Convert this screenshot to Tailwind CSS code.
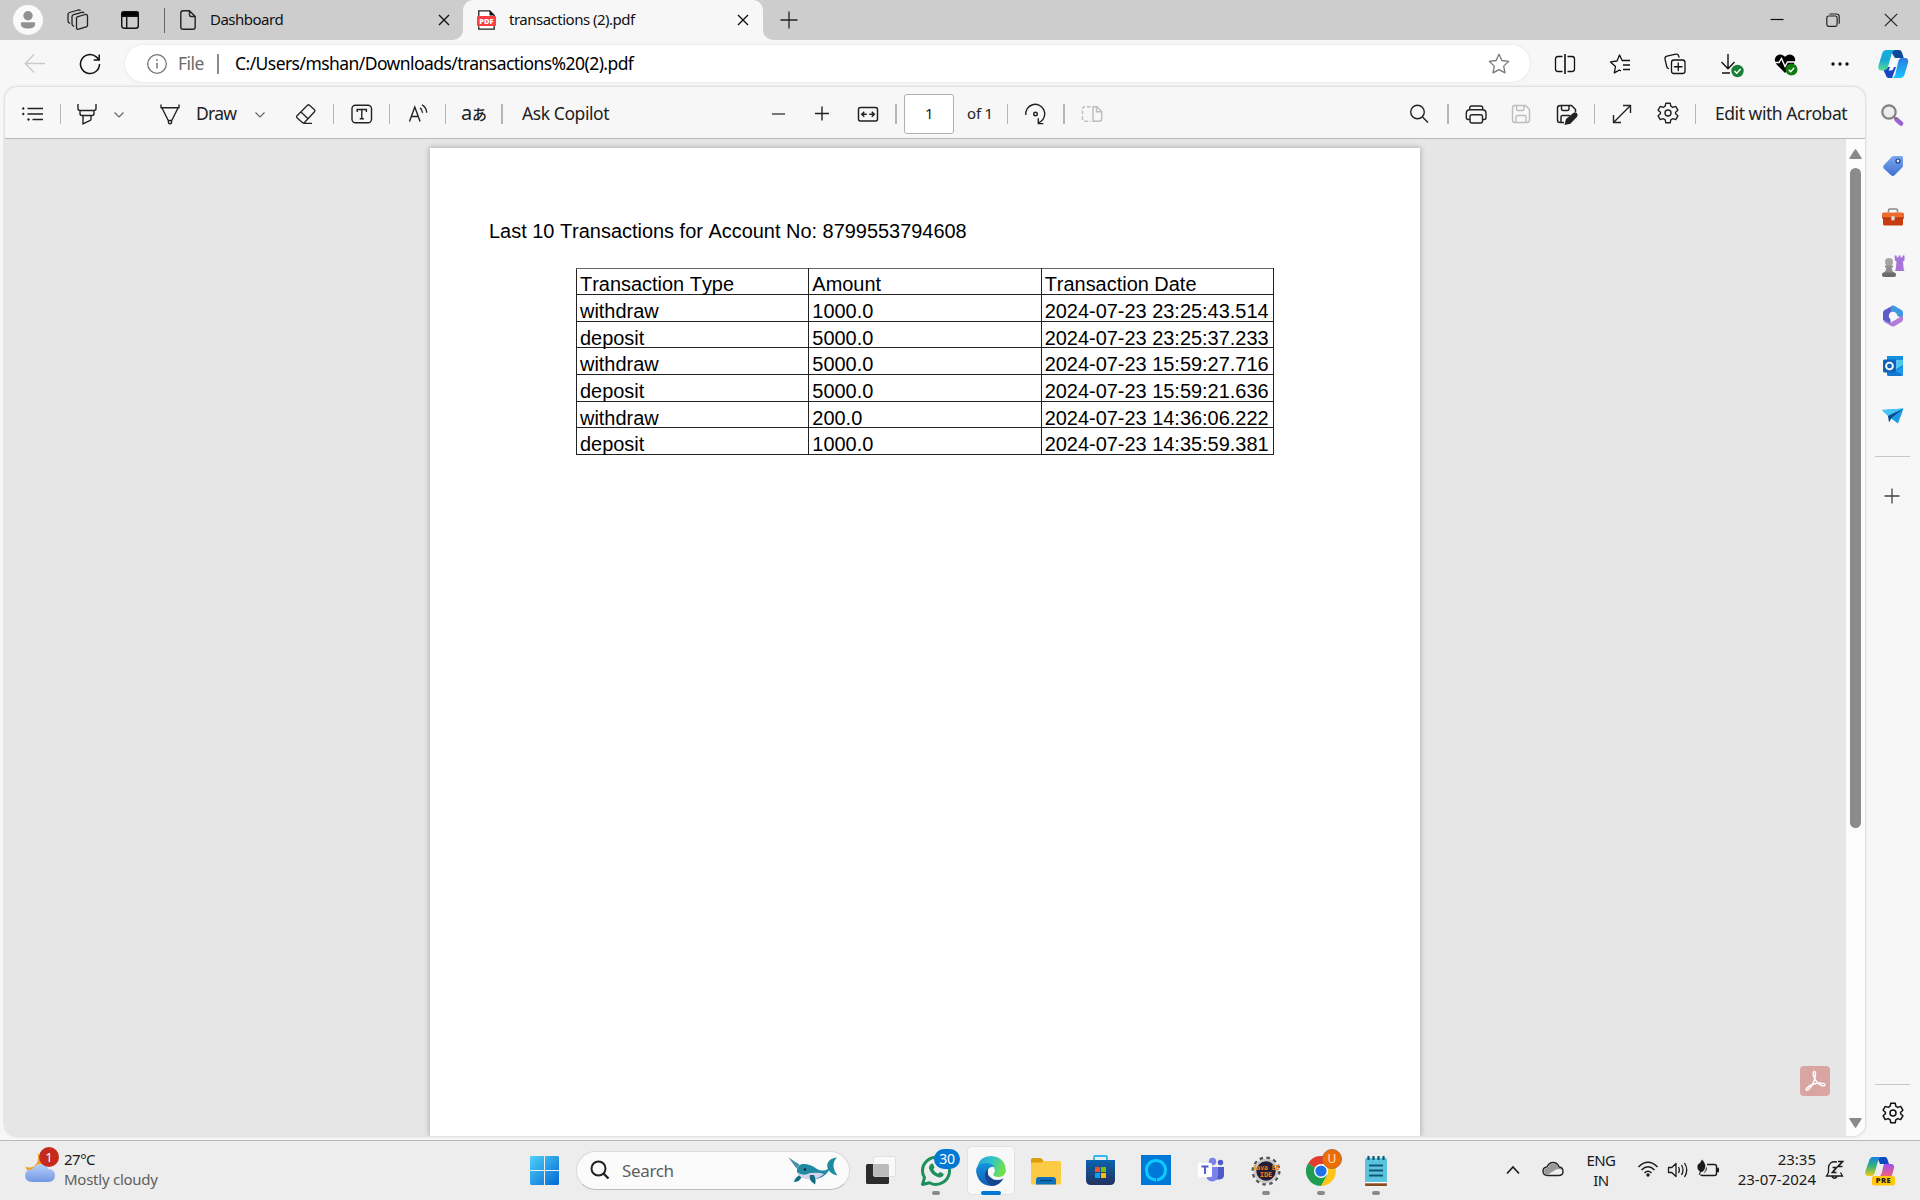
<!DOCTYPE html>
<html lang="en">
<head>
<meta charset="utf-8">
<title>transactions (2).pdf</title>
<script src="https://cdn.jsdelivr.net/npm/@tailwindcss/browser@4"></script>
</head>
<body class="w-[1920px] h-[1200px] overflow-hidden bg-[#f7f7f7] font-['Noto_Sans','Open_Sans',sans-serif] text-[#111] flex flex-col">

<!-- Tab strip -->
<header class="flex h-10 shrink-0 bg-[#f7f7f7]">
  <div class="flex items-center w-[463px] bg-[#cdcdcd] rounded-br-[10px]">
    <svg class="ml-[13px] shrink-0" width="30" height="30" viewBox="0 0 30 30"><circle cx="15" cy="15" r="15" fill="#fafafa"/><circle cx="15" cy="10.8" r="4.7" fill="#919191"/><path d="M8 17.3h14v2.200c0 2.600-3 4-7 4s-7-1.400-7-4z" fill="#919191"/></svg>
    <svg class="ml-[23px] shrink-0" width="24" height="24" viewBox="0 0 24 24" fill="none" stroke="#222" stroke-width="1.300" stroke-linejoin="round" stroke-linecap="round"><path d="M11.200 8.800l8-2.300q2.300-.5 2.300 1.700v9q0 1.300-1.300 1.700l-7.500 2.300q-2.200.6-2.200-1.600v-9q0-1.300.7-1.800z"/><path d="M7.700 18.200q-1.700-.4-1.700-2.200V8.800q0-1.600 1.600-2.100l8.400-2.400q1.300-.2 1.800.4M3.600 15.200Q2 14.600 2 12.700V6.500q0-1.500 1.500-2L12.200 2q1.300-.3 1.900.3"/></svg>
    <svg class="ml-[28px] shrink-0" width="24" height="24" viewBox="0 0 24 24" fill="none" stroke="#111" stroke-width="1.400"><rect x="3.700" y="3.700" width="16.600" height="16.600" rx="2.500"/><path d="M3.700 8.200V6q0-2.300 2.300-2.300h12q2.300 0 2.300 2.300v2.200z" fill="#000"/><path d="M8.700 8v12"/></svg>
    <div class="ml-[22px] w-px h-[25px] bg-[#666] shrink-0"></div>
    <svg class="ml-[15px] shrink-0" width="16" height="20" viewBox="0 0 16 20" fill="none" stroke="#222" stroke-width="1.400" stroke-linejoin="round"><path d="M.8 3q0-2.200 2.200-2.200h6.500L15.200 6.500V17q0 2.200-2.200 2.200H3Q.8 19.200.8 17zM9.500.8V5q0 1.500 1.500 1.500h4.200"/></svg>
    <span class="ml-[14px] w-[228px] mb-[2px] shrink-0 text-[15px] leading-5 tracking-[-0.5px] whitespace-nowrap">Dashboard</span>
    <svg class="shrink-0" width="12" height="12" viewBox="0 0 12 12" stroke="#111" stroke-width="1.400"><path d="M1 1l10 10M11 1L1 11"/></svg>
  </div>
  <div class="w-[300px] bg-[#cdcdcd]">
    <div class="flex items-center h-full bg-[#f7f7f7] rounded-t-[10px]">
      <svg class="ml-[14px] shrink-0" width="19" height="20" viewBox="0 0 19 20"><path d="M1.800 7V.8h11l4.400 4.400v14H1.800v-3" fill="#fff" stroke="#222" stroke-width="1.300"/><path d="M12.500.5v5h5z" fill="#111"/><rect x="0" y="6" width="19" height="10" rx="1" fill="#f93f3f"/><text x="9.500" y="13.900" text-anchor="middle" font-family="Open Sans" font-size="7.500" font-weight="800" fill="#fff">PDF</text></svg>
      <span class="ml-[13px] w-[228px] mb-[2px] text-[15px] leading-5 tracking-[-0.5px] whitespace-nowrap">transactions (2).pdf</span>
      <svg width="12" height="12" viewBox="0 0 12 12" stroke="#111" stroke-width="1.400"><path d="M1 1l10 10M11 1L1 11"/></svg>
    </div>
  </div>
  <div class="flex items-center flex-1 bg-[#cdcdcd] rounded-bl-[10px]">
    <svg class="ml-[17px]" width="18" height="18" viewBox="0 0 18 18" stroke="#222" stroke-width="1.300"><path d="M9 .5v17M.5 9h17"/></svg>
    <svg class="ml-auto" width="14" height="14" viewBox="0 0 14 14" stroke="#111" stroke-width="1.200"><path d="M.5 6.500h13"/></svg>
    <svg class="ml-[42px]" width="14" height="14" viewBox="0 0 14 14" fill="none" stroke="#222" stroke-width="1.200"><rect x=".8" y="3" width="10.300" height="10.300" rx="1.800"/><path d="M3.500 1h7q2.700 0 2.700 2.700v7"/></svg>
    <svg class="ml-[44px] mr-[22px]" width="14" height="14" viewBox="0 0 14 14" stroke="#222" stroke-width="1.200"><path d="M.8.800l12.400 12.400M13.200.800L.8 13.200"/></svg>
  </div>
</header>

<!-- Address row -->
<nav class="flex items-center h-[47px] shrink-0">
  <svg class="ml-[23px] shrink-0" width="24" height="24" viewBox="0 0 24 24" fill="none" stroke="#c9c9c9" stroke-width="1.400"><path d="M22 11.500H2.500M11 2.500l-8.700 9 8.700 9"/></svg>
  <svg class="ml-[31px] shrink-0" width="24" height="24" viewBox="0 0 24 24" fill="none" stroke="#111" stroke-width="1.500"><path d="M21.500 12a9.500 9.500 0 1 1-3.200-7.100L21 7.500M21.200 2.500v5.500h-5.500"/></svg>
  <div class="ml-[23px] flex items-center w-[1405px] h-[37px] rounded-full bg-white shadow-[0_0_3px_rgba(0,0,0,0.10)]">
    <svg class="ml-[22px] shrink-0" width="20" height="20" viewBox="0 0 20 20" fill="none" stroke="#767676" stroke-width="1.300"><circle cx="10" cy="10" r="9.300"/><path d="M10 8.800v5.700" stroke-width="1.500"/><circle cx="10" cy="6" r=".9" fill="#767676" stroke="none"/></svg>
    <span class="ml-[11px] w-[39px] mb-[2px] text-[17.500px] leading-6 tracking-[-0.5px] text-[#6b6b6b]">File</span>
    <div class="w-[2px] h-5 bg-[#8a8a8a]"></div>
    <span class="ml-[16px] mb-[2px] text-[17.500px] leading-6 tracking-[-0.56px] whitespace-nowrap text-black">C:/Users/mshan/Downloads/transactions%20(2).pdf</span>
    <svg class="ml-auto mr-[19px]" width="24" height="24" viewBox="0 0 24 24" fill="none" stroke="#777" stroke-width="1.300" stroke-linejoin="round"><path d="M12 2.300l2.900 6.200 6.800.9-5 4.700 1.300 6.800-6-3.300-6 3.300 1.300-6.800-5-4.700 6.800-.9z"/></svg>
  </div>
  <svg class="ml-[23px] shrink-0" width="24" height="24" viewBox="0 0 24 24" fill="none" stroke="#111" stroke-width="1.300"><path d="M9.500 4.500H5q-2.500 0-2.500 2.500v10q0 2.500 2.500 2.500h4.500M14.500 4.500H19q2.500 0 2.500 2.500v10q0 2.500-2.500 2.500h-4.500"/><path d="M12 2v20" stroke-width="1.600"/></svg>
  <svg class="ml-[31px] shrink-0" width="24" height="24" viewBox="0 0 24 24" fill="none" stroke="#111" stroke-width="1.300" stroke-linejoin="round"><path d="M13 19l-1.500-1-5.200 2.900 1.200-6.400-5-4.600 6.500-.9L11.500 3l2.700 5.500H22M15 13h7M15 17.500h7"/></svg>
  <svg class="ml-[31px] shrink-0" width="24" height="24" viewBox="0 0 24 24" fill="none" stroke="#111" stroke-width="1.300" stroke-linecap="round"><rect x="8.500" y="8" width="13.500" height="13.500" rx="2.500"/><path d="M15.250 11v7.500M11.500 14.750H19M5.500 16.500Q4 16 3.700 14.500L2 7.200Q1.600 4.800 4 4.200l8.800-2Q15 1.800 15.700 4l.3 1.200"/></svg>
  <svg class="ml-[32px] shrink-0" width="28" height="28" viewBox="0 0 28 28" fill="none" stroke="#111" stroke-width="1.400"><path d="M9 4v14.500M2.500 12l6.500 6.700 6.500-6.700M3 23h8"/><circle cx="18.500" cy="21" r="6.200" fill="#1a7f37" stroke="none"/><path d="M15.500 21l2.200 2.200 4-4.200" stroke="#fff"/></svg>
  <svg class="ml-[25px] shrink-0" width="28" height="28" viewBox="0 0 28 28" fill="none"><path d="M13 23L4.200 14Q1.500 10 4 6.500q4-4 9 .2 5-4.200 9-.2 2.500 3.500-.2 7.500z" fill="#000"/><path d="M2 12.500h5l2.500-4 3.500 8 2.500-4.500h8" stroke="#fff" stroke-width="1.400"/><circle cx="19.500" cy="19.500" r="6" fill="#107c10"/><path d="M16.700 19.700l2 2 3.500-3.900" stroke="#fff" stroke-width="1.400"/></svg>
  <svg class="ml-[28px] shrink-0" width="24" height="24" viewBox="0 0 24 24" fill="#111"><circle cx="5" cy="12" r="1.700"/><circle cx="12" cy="12" r="1.700"/><circle cx="19" cy="12" r="1.700"/></svg>
  <svg class="ml-[26px] shrink-0" width="31" height="30" viewBox="0 0 31 30"><defs><linearGradient id="ca" x1="0" y1="0" x2="0" y2="1"><stop offset="0" stop-color="#0fafdc"/><stop offset=".5" stop-color="#1aa8d8"/><stop offset="1" stop-color="#5be08b"/></linearGradient><linearGradient id="cb" x1="0" y1="0" x2="0" y2="1"><stop offset="0" stop-color="#2b7be0"/><stop offset="1" stop-color="#17c3ff"/></linearGradient></defs><path d="M12 1h9q2.500 0 3.500 4l1.200 4H17z" fill="#0a4a9c"/><path d="M8.500 1H17q-2.500 1-3.400 4L10 18q-1 3.500-4 3.500H3.500Q-.5 21.500.5 16.500L4 5q1.200-4 4.500-4z" fill="url(#ca)"/><path d="M5.500 21.300Q9 21 10 18h8l-4 11h-3q-2.500 0-3.500-3.500z" fill="#1746c4"/><path d="M20.500 9H27q4 0 3 5l-3.300 11q-1 4-4.700 4h-8q2.500-.8 3.300-3.500l2.700-12q.9-4.500 3.500-4.500z" fill="url(#cb)"/><path d="M16.500 9.500h3q-2 1.500-2.500 4l-1.500 6q-.8 2-2.500 2h-2.500z" fill="#fff"/></svg>
</nav>

<div class="flex h-[1053px] shrink-0">
  <!-- PDF viewer -->
  <main class="ml-[5px] w-[1860px] h-[1049px] flex flex-col rounded-[12px] overflow-hidden shadow-[0_0_3px_rgba(0,0,0,0.25)] bg-[#f7f7f7]">
    <div class="flex items-center h-[52px] pt-[2px] shrink-0 border-b border-[#b9b9b9] text-[17.500px] tracking-[-0.42px] text-[#222] whitespace-nowrap">
      <svg class="ml-[15px] shrink-0" width="24" height="24" viewBox="0 0 24 24" stroke="#222" stroke-width="1.500" fill="#222"><path d="M7.500 6.500H23M7.500 12H23M12.500 17.500H23"/><circle cx="3.300" cy="6.500" r=".9" stroke-width=".6"/><circle cx="3.300" cy="12" r=".9" stroke-width=".6"/><circle cx="8.500" cy="17.500" r=".9" stroke-width=".6"/></svg>
      <div class="ml-[16px] w-px h-5 bg-[#b5b5b5] shrink-0"></div>
      <svg class="ml-[14px] shrink-0" width="24" height="24" viewBox="0 0 24 24" fill="none" stroke="#222" stroke-width="1.400"><path d="M3 2v4.500Q3 8.500 5 8.500h14q2 0 2-2V2M5 8.500v3q0 2 2 2h10q2 0 2-2v-3M8 13.500V22l7.200-3.500q.8-.5.8-1.500v-3.500"/></svg>
      <svg class="ml-[14px] shrink-0" width="12" height="12" viewBox="0 0 12 12" fill="none" stroke="#666" stroke-width="1.200"><path d="M1.500 4.500L6 9l4.500-4.500"/></svg>
      <svg class="ml-[33px] shrink-0" width="24" height="24" viewBox="0 0 24 24" fill="none" stroke="#222" stroke-width="1.400" stroke-linejoin="round"><path d="M3 2.500v3.300h18V2.500M4 6l6.500 13M20 6l-6.500 13M10.500 18.500V21q1.500 1.600 3 0v-2.500z"/></svg>
      <span class="ml-[14px] w-[41px] tracking-[-0.7px]">Draw</span>
      <svg class="ml-[17px] shrink-0" width="12" height="12" viewBox="0 0 12 12" fill="none" stroke="#666" stroke-width="1.200"><path d="M1.500 4.500L6 9l4.500-4.500"/></svg>
      <svg class="ml-[28px] shrink-0" width="24" height="24" viewBox="0 0 24 24" fill="none" stroke="#222" stroke-width="1.300" stroke-linejoin="round"><path d="M13.500 3.200q1-1 2 0l5 4.600q1 1 0 2L10.500 20.500q-1 1.200-2.200 0L3 15.700q-1-1 0-2zM6.700 9.800l7.300 7M9.500 21.300H18"/></svg>
      <div class="ml-[15px] w-px h-5 bg-[#b5b5b5] shrink-0"></div>
      <svg class="ml-[16px] shrink-0" width="24" height="24" viewBox="0 0 24 24" fill="none" stroke="#222" stroke-width="1.400"><rect x="2" y="3.300" width="19.500" height="17.400" rx="3.500"/><path d="M7.200 10V7.500h9.200V10M11.800 7.500v9.300M9.700 16.800h4.200"/></svg>
      <div class="ml-[15px] w-px h-5 bg-[#b5b5b5] shrink-0"></div>
      <svg class="ml-[16px] shrink-0" width="24" height="24" viewBox="0 0 24 24" fill="none" stroke="#222" stroke-width="1.400"><path d="M3.500 19.500L8.800 5l5.300 14.500M5.300 14.500h7M14 5.800q2.300 1.500 2.500 5M16 2.800q4.500 2.500 4.700 8"/></svg>
      <div class="ml-[15px] w-px h-5 bg-[#b5b5b5] shrink-0"></div>
      <span class="ml-[15px] w-[24px] shrink-0 flex items-baseline leading-6"><span class="text-[20px] tracking-[-0.3px]">a</span><span class="text-[15px] font-medium tracking-[-1px] font-['Noto_Sans_CJK_JP',sans-serif]">あ</span></span>
      <div class="ml-[16px] w-[2px] h-5 bg-[#b5b5b5] shrink-0"></div>
      <span class="ml-[19px] w-[90px]">Ask Copilot</span>
      <svg class="ml-[154px] shrink-0" width="24" height="24" viewBox="0 0 24 24" stroke="#777" stroke-width="1.800"><path d="M6 12h13"/></svg>
      <svg class="ml-[20px] shrink-0" width="24" height="24" viewBox="0 0 24 24" stroke="#222" stroke-width="1.400"><path d="M5 11.500h14M12 4.500v14"/></svg>
      <svg class="ml-[22px] shrink-0" width="24" height="24" viewBox="0 0 24 24" fill="none" stroke="#222" stroke-width="1.500"><rect x="2.500" y="5.500" width="19" height="13.500" rx="2"/><path d="M5.800 12.200h5M8.300 9.700l-2.500 2.500 2.500 2.500M13.300 12.200h5M15.800 9.700l2.500 2.500-2.500 2.500"/></svg>
      <div class="ml-[15px] w-[2px] h-5 bg-[#b5b5b5] shrink-0"></div>
      <div class="ml-[7px] w-[50px] h-10 shrink-0 bg-white border border-[#b0b0b0] rounded-[3px] flex items-center justify-center text-[15px]">1</div>
      <span class="ml-[13px] w-[26px] text-[15px] tracking-[-0.2px]">of 1</span>
      <div class="ml-[14px] w-px h-5 bg-[#b5b5b5] shrink-0"></div>
      <svg class="ml-[15px] shrink-0" width="24" height="24" viewBox="0 0 24 24" fill="none" stroke="#222" stroke-width="1.400"><path d="M2.800 13a9.500 9.500 0 1 1 15 6.500l-2.500 1.800M15.300 16.300v5.300h5"/><circle cx="12.500" cy="12" r="1.800"/></svg>
      <div class="ml-[16px] w-[2px] h-5 bg-[#b5b5b5] shrink-0"></div>
      <svg class="ml-[15px] shrink-0" width="24" height="24" viewBox="0 0 24 24" fill="none" stroke="#bdbdbd" stroke-width="1.400"><path d="M10.500 4.800H5q-2.500 0-2.500 2.500v9.400q0 2.500 2.500 2.500h5.500" stroke-dasharray="3.500 2"/><path d="M13 4.800h4l4.700 4.700v7.200q0 2.500-2.500 2.500H13zM16.500 4.800v5h5"/></svg>
      <svg class="ml-[303px] shrink-0" width="24" height="24" viewBox="0 0 24 24" fill="none" stroke="#222" stroke-width="1.400"><circle cx="10.500" cy="10" r="6.800"/><path d="M15.500 15l5.500 5.500"/></svg>
      <div class="ml-[16px] w-[2px] h-5 bg-[#b5b5b5] shrink-0"></div>
      <svg class="ml-[15px] shrink-0" width="24" height="24" viewBox="0 0 24 24" fill="none" stroke="#222" stroke-width="1.400"><path d="M5.700 7.500V6q0-2 2-2h9q2 0 2 2v1.500M6 17.500H4.300Q2.300 17.500 2.300 15.500v-4.200q0-3.600 3.600-3.600h12.500q3.600 0 3.600 3.600v4.200q0 2-2 2H18.500"/><rect x="6" y="12.700" width="12.500" height="8.300" rx="2"/></svg>
      <svg class="ml-[21px] shrink-0" width="24" height="24" viewBox="0 0 24 24" fill="none" stroke="#bdbdbd" stroke-width="1.400"><path d="M5.500 3.500h11l4 4v10.500q0 2.500-2.500 2.500H6q-2.500 0-2.500-2.500V6q0-2.500 2-2.500zM7.500 3.500V7q0 1.500 1.500 1.500h4.500Q15 8.500 15 7V3.500M7 20.500V15q0-1.500 1.500-1.500h7Q17 13.500 17 15v5.500"/></svg>
      <svg class="ml-[22px] shrink-0" width="24" height="24" viewBox="0 0 24 24" fill="none" stroke="#222" stroke-width="1.500"><path d="M20.500 10V7.500l-4-4h-11q-3 0-3 2.500v12q0 2.500 2.500 2.500h4M6.500 3.500V7Q6.500 8.500 8 8.500h4.500Q14 8.500 14 7V3.500M6 20.500V15q0-1.500 1.500-1.500H15"/><path d="M10.500 22l1.200-4.500 7-6q1.500-1 2.700.2t0 2.700l-6.400 6.600z" fill="#222"/></svg>
      <div class="ml-[15px] w-px h-5 bg-[#b5b5b5] shrink-0"></div>
      <svg class="ml-[15px] shrink-0" width="24" height="24" viewBox="0 0 24 24" fill="none" stroke="#222" stroke-width="1.400"><path d="M3.500 20.500l17-17M13 3.500h7.500V11M3.500 13v7.500H11"/></svg>
      <svg class="ml-[22px] mb-[2px] shrink-0" width="24" height="24" viewBox="0 0 24 24" fill="none" stroke="#222" stroke-width="1.400" stroke-linejoin="round"><circle cx="12" cy="12" r="3"/><path d="M9.800 2.200h4.400l.6 3 2 1.200 2.900-1 2.200 3.800-2.300 2v1.600l2.300 2-2.200 3.800-2.900-1-2 1.200-.6 3H9.800l-.6-3-2-1.200-2.900 1-2.200-3.800 2.300-2v-1.600l-2.300-2 2.200-3.800 2.900 1 2-1.200z"/></svg>
      <div class="ml-[15px] w-px h-5 bg-[#b5b5b5] shrink-0"></div>
      <span class="ml-[19px] tracking-[-0.45px]">Edit with Acrobat</span>
    </div>

    <div class="flex flex-1 min-h-0 bg-[#e6e6e6]">
      <!-- Page -->
      <article class="ml-[425px] mt-[9px] w-[990px] shrink-0 bg-white shadow-[0_0_5px_1px_rgba(0,0,0,0.22)] font-['Liberation_Sans',Arial,sans-serif] text-[19.960px] [font-kerning:none] text-black whitespace-nowrap">
        <h1 class="mt-[71px] ml-[59px] leading-[24px]">Last 10 Transactions for Account No: 8799553794608</h1>
        <table class="mt-[25px] ml-[146px] w-[698px] table-fixed border-collapse leading-[18px]">
          <tr class="h-[26px] align-top"><td class="border border-[#222] border-t-[#666] p-0 pl-[3px] pt-[6px]">Transaction Type</td><td class="border border-[#222] border-t-[#666] p-0 pl-[3px] pt-[6px]">Amount</td><td class="border border-[#222] border-t-[#666] p-0 pl-[3px] pt-[6px]">Transaction Date</td></tr>
          <tr class="h-[27px] align-top"><td class="border border-[#222] p-0 pl-[3px] pt-[7px]">withdraw</td><td class="border border-[#222] p-0 pl-[3px] pt-[7px]">1000.0</td><td class="border border-[#222] p-0 pl-[3px] pt-[7px]">2024-07-23 23:25:43.514</td></tr>
          <tr class="h-[26px] align-top"><td class="border border-[#222] p-0 pl-[3px] pt-[7px]">deposit</td><td class="border border-[#222] p-0 pl-[3px] pt-[7px]">5000.0</td><td class="border border-[#222] p-0 pl-[3px] pt-[7px]">2024-07-23 23:25:37.233</td></tr>
          <tr class="h-[27px] align-top"><td class="border border-[#222] p-0 pl-[3px] pt-[7px]">withdraw</td><td class="border border-[#222] p-0 pl-[3px] pt-[7px]">5000.0</td><td class="border border-[#222] p-0 pl-[3px] pt-[7px]">2024-07-23 15:59:27.716</td></tr>
          <tr class="h-[27px] align-top"><td class="border border-[#222] p-0 pl-[3px] pt-[7px]">deposit</td><td class="border border-[#222] p-0 pl-[3px] pt-[7px]">5000.0</td><td class="border border-[#222] p-0 pl-[3px] pt-[7px]">2024-07-23 15:59:21.636</td></tr>
          <tr class="h-[26px] align-top"><td class="border border-[#222] p-0 pl-[3px] pt-[7px]">withdraw</td><td class="border border-[#222] p-0 pl-[3px] pt-[7px]">200.0</td><td class="border border-[#222] p-0 pl-[3px] pt-[7px]">2024-07-23 14:36:06.222</td></tr>
          <tr class="h-[27px] align-top"><td class="border border-[#222] p-0 pl-[3px] pt-[7px]">deposit</td><td class="border border-[#222] p-0 pl-[3px] pt-[7px]">1000.0</td><td class="border border-[#222] p-0 pl-[3px] pt-[7px]">2024-07-23 14:35:59.381</td></tr>
        </table>
      </article>
      <div class="ml-auto mr-[16px] mb-[40px] self-end w-[30px] h-[30px] rounded-[4px] bg-[#d9a5a3]">
        <svg width="30" height="30" viewBox="0 0 30 30" fill="none" stroke="#fff" stroke-width="1.400"><path d="M14 5.500c2.500-.5 1.500 5 .3 8.500-1.500 4.500-4.800 10-7.300 10.200-2.800-.2 1-4.500 7-6.200 5-1.400 10.800-1.300 11 .7 0 2-4 1.200-7-1.500S11.500 7 14 5.500z"/></svg>
      </div>
      <div class="w-[19px] bg-[#fcfcfc] flex flex-col items-center">
        <svg class="mt-[10px] shrink-0" width="13" height="11" viewBox="0 0 13 11"><path d="M6.500 1L12 9.300H1z" fill="#8a8a8a" stroke="#8a8a8a" stroke-width="1.500" stroke-linejoin="round"/></svg>
        <div class="mt-[8px] w-[11px] h-[660px] rounded-full bg-[#8b8b8b]"></div>
        <svg class="mt-auto mb-[8px] shrink-0" width="13" height="11" viewBox="0 0 13 11"><path d="M6.500 10L12 1.700H1z" fill="#8a8a8a" stroke="#8a8a8a" stroke-width="1.500" stroke-linejoin="round"/></svg>
      </div>
    </div>
  </main>

  <!-- Sidebar -->
  <aside class="flex-1 flex flex-col items-center">
    <svg class="mt-[16px] mr-[2px] shrink-0" width="24" height="24" viewBox="0 0 24 24" fill="none"><path d="M16.500 16.500l4.500 4" stroke="#9b63d0" stroke-width="4.500" stroke-linecap="round"/><path d="M13.500 13.500l3 3" stroke="#777" stroke-width="2"/><circle cx="9" cy="9" r="6.700" stroke="#828282" stroke-width="2.200" fill="#ececec"/></svg>
    <svg class="mt-[27px] shrink-0" width="24" height="24" viewBox="0 0 24 24"><defs><linearGradient id="tg" x1="0" y1="0" x2="0" y2="1"><stop offset="0" stop-color="#79a9f2"/><stop offset="1" stop-color="#3f6fd0"/></linearGradient></defs><path d="M11 2.500Q11.800 2 13 2h7.500Q22 2 22 3.500v8q0 1.300-1 2.300l-7.500 7.500q-1.700 1.500-3.500 0L2.800 14.500q-1.500-1.700 0-3.300z" fill="url(#tg)"/><circle cx="17" cy="7" r="2" fill="#dce8fb" stroke="#223c82" stroke-width="1.200"/></svg>
    <svg class="mt-[27px] shrink-0" width="24" height="24" viewBox="0 0 24 24"><path d="M7.500 7.500V5.500Q7.500 4 9 4h6q1.500 0 1.500 1.500v2" fill="none" stroke="#888" stroke-width="1.600"/><rect x="2" y="9" width="20" height="11.500" rx="1.500" fill="#c83b10"/><path d="M1 9q0-1.500 1.500-1.500h19Q23 7.500 23 9v4H1z" fill="#ee6a2d"/><path d="M1 13h22" stroke="#9b2c0a"/><rect x="10.200" y="11" width="3.600" height="4.500" rx="1.500" fill="#d8d8d8"/></svg>
    <svg class="mt-[25px] shrink-0" width="24" height="24" viewBox="0 0 24 24"><path d="M13.500 1.500h2.200v2h1.800v-2h2v2h1.800v-2H23.500v5l-1.500 1 .7 7.500.8 2h-9.500l.8-2 .7-7.500-1.500-1z" fill="#a673d8"/><circle cx="8" cy="8" r="4" fill="#a5a5a5"/><path d="M4 11.500h8v2h-1.500q.5 4 3 5.500H2.500q2.500-1.500 3-5.500H4z" fill="#8d8d8d"/><rect x="1" y="18.500" width="14" height="4.500" rx="2" fill="#6b6b6b"/></svg>
    <svg class="mt-[26px] shrink-0" width="24" height="24" viewBox="0 0 24 24"><path d="M12 1.500L3.500 6Q2 7 2 8.500v7.500l7.500 4V8.500L16.500 4z" fill="#5b5cc9"/><path d="M10 2.200q2-1.200 4 0L20.500 6Q22 7 22 8.800V15l-6-3.500q-1-3.500-6-2.500-.5-4 0-6.800z" fill="#3e9ae0"/><path d="M2.200 16.500q.5 1.200 1.500 1.700l6.500 3.700q1.800 1 3.600 0l6.700-3.900Q22 17 22 15.200v-4L9 19z" fill="#b47bd8"/><circle cx="12" cy="12" r="4.200" fill="#f7f7f7"/></svg>
    <svg class="mt-[26px] shrink-0" width="24" height="24" viewBox="0 0 24 24"><rect x="6" y="2" width="16" height="13" rx="1" fill="#50c8f0"/><rect x="6" y="2" width="16" height="4" fill="#1490df"/><path d="M6 13l8 3 8-5v9.500q0 1.500-1.500 1.500h-13Q6 22 6 20.500z" fill="#1478d0"/><path d="M14 17l8-5v9z" fill="#1a9ae8"/><rect x="2" y="5.500" width="13" height="13" rx="1.500" fill="#0f64b8"/><circle cx="8.500" cy="12" r="3.400" fill="none" stroke="#fff" stroke-width="1.900"/></svg>
    <svg class="mt-[26px] shrink-0" width="24" height="24" viewBox="0 0 24 24"><path d="M1 6l21.500-1.500L17 19.500 9.500 14z" fill="#1b9be6"/><path d="M1 6l21.500-1.500L7 12z" fill="#45c5f5"/><path d="M7 12l15-7.300L10.500 14 8 18.500z" fill="#0b4a8e"/></svg>
    <div class="mt-[28px] w-[35px] h-px bg-[#c8c8c8] shrink-0"></div>
    <svg class="mt-[31px] mr-[2px] shrink-0" width="16" height="16" viewBox="0 0 16 16" stroke="#444" stroke-width="1.300"><path d="M8 .5v15M.5 8h15"/></svg>
    <div class="mt-auto w-[35px] h-px bg-[#c8c8c8] shrink-0"></div>
    <svg class="mt-[16px] mb-[15px] shrink-0" width="24" height="24" viewBox="0 0 24 24" fill="none" stroke="#111" stroke-width="1.500" stroke-linejoin="round"><circle cx="12" cy="12" r="3"/><path d="M9.800 2.200h4.400l.6 3 2 1.200 2.900-1 2.200 3.800-2.300 2v1.600l2.300 2-2.200 3.800-2.900-1-2 1.200-.6 3H9.800l-.6-3-2-1.200-2.900 1-2.200-3.800 2.300-2v-1.600l-2.300-2 2.200-3.800 2.900 1 2-1.200z"/></svg>
  </aside>
</div>

<!-- Taskbar -->
<footer class="flex items-center h-[60px] shrink-0 bg-[#ededed] border-t border-[#b9b9b9]">
  <div class="ml-[23px] mb-[12px] relative w-[41px] h-10 shrink-0">
    <svg width="36" height="40" viewBox="0 0 36 40"><defs><linearGradient id="cl" x1="0" y1="0" x2="0" y2="1"><stop offset="0" stop-color="#b9d2fb"/><stop offset="1" stop-color="#7297e2"/></linearGradient></defs><path d="M14.500 8q2.500 9-4 13.500Q6.500 23.500 2 21.500 4 26.500 9 27.500L21 20q-2-8-6.500-12z" fill="#f2a12a"/><path d="M9.500 37Q2 37 2 30.500 2.500 24 9 24.500 12 19 18 19q6 .5 7.500 5 6.500.5 6.500 6.500T25 37z" fill="url(#cl)"/></svg>
    <span class="absolute left-[16px] top-[2px] w-5 h-5 rounded-full bg-[#c42b1c] text-white text-[13px] leading-5 text-center">1</span>
  </div>
  <div class="w-[121px] text-[15px] leading-5 tracking-[-0.25px] whitespace-nowrap pb-[3px]"><div class="text-[#1b1b1b] tracking-[-0.5px]">27°C</div><div class="text-[#5f5f5f]">Mostly cloudy</div></div>

  <svg class="ml-[345px] shrink-0" width="29" height="29" viewBox="0 0 29 29"><defs><linearGradient id="wn" gradientUnits="userSpaceOnUse" x1="0" y1="0" x2="29" y2="29"><stop offset="0" stop-color="#4fd0fb"/><stop offset="1" stop-color="#0268d2"/></linearGradient></defs><path d="M1 0h13v14H0V1zM15 0h13l1 1v13H15zM0 15h14v14H1l-1-1zM15 15h14v13l-1 1H15z" fill="url(#wn)"/></svg>
  <div class="ml-[17px] w-[274px] h-[39px] shrink-0 rounded-full bg-[#fbfbfb] border border-[#dadada] border-b-[#bcbcbc] flex items-center">
    <svg class="ml-[12px] mb-px" width="22" height="22" viewBox="0 0 22 22" fill="none" stroke="#222" stroke-width="2"><circle cx="9.500" cy="9.500" r="7"/><path d="M14.500 14.500l5 5" stroke-width="2.400"/></svg>
    <span class="ml-[11px] text-[17px] tracking-[-0.35px] text-[#5f5f5f]">Search</span>
    <svg class="ml-auto mr-[11px]" width="50" height="28" viewBox="0 0 50 28"><path d="M.5.5l11 7-3 4z" fill="#4a8fa5"/><path d="M9 15q-1-6 5-8 8-.5 15 5 6 3 11 0-2-5 1-8 2-3 8-3.500-4 4-3.500 9 .5 5 4 9-6-1-8.500-5-5 8-16 9Q11 22 9 15z" fill="#1f8ba3"/><path d="M9 15q6 5 13 1 9-1 14 1-6 5-13 5.500Q12 22 9 15z" fill="#d8d2ee"/><path d="M11 18.500q-4 2-5 6.500 5 0 7.500-4.500zM22 18q-2 5 5 9.500 1.500-5-1-9.500z" fill="#146b80"/><circle cx="17" cy="12.500" r="1.300" fill="#10242c"/></svg>
  </div>
  <svg class="ml-[15px] shrink-0" width="32" height="32" viewBox="0 0 32 32"><rect x="1" y="9" width="23" height="20" rx="1.500" fill="#2c2c2c"/><rect x="8.500" y="1.500" width="22" height="20" rx="1.500" fill="#fff" fill-opacity=".68" stroke="#dadada" stroke-width=".8"/></svg>
  <div class="ml-[15px] w-[48px] h-[48px] shrink-0 relative flex items-center justify-center">
    <svg width="32" height="32" viewBox="0 0 32 32" fill="none"><path d="M2.500 29.500l2-7Q2.500 19.500 2.500 16A13.500 13.500 0 1 1 9.500 27.700z" stroke="#1d8f5a" stroke-width="3" stroke-linejoin="round"/><path d="M10.500 9.500q2-2 3 .5l1 2.500-1.200 2q1.500 3 4.700 4.200l2-1.700 3.200 1.500q1 .8 0 2.300-2 2.500-5.700 1.200-6.500-2.500-8.500-8.500-.5-2.500 1.500-4z" fill="#1d8f5a"/></svg>
    <span class="absolute left-[22px] top-[2px] w-[26px] h-5 rounded-full bg-[#0078d4] text-white text-[14px] leading-5 text-center tracking-[-0.3px]">30</span>
    <span class="absolute left-[20px] bottom-0 w-2 h-1 rounded-full bg-[#8a8a8a]"></span>
  </div>
  <div class="ml-[7px] w-[48px] h-[49px] shrink-0 relative flex items-center justify-center rounded-[5px] bg-[#f8f8f8] border border-[#e3e3e3]">
    <svg width="30" height="30" viewBox="0 0 30 30"><defs><linearGradient id="eg" x1="0" y1="0" x2="1" y2=".3"><stop offset="0" stop-color="#2a9fe0"/><stop offset=".5" stop-color="#2cc3cf"/><stop offset="1" stop-color="#6fe04f"/></linearGradient><linearGradient id="eh" x1="0" y1="0" x2="0" y2="1"><stop offset="0" stop-color="#1594dc"/><stop offset="1" stop-color="#0f5cb8"/></linearGradient></defs><path d="M1 11Q4 0 15 0q8 0 12.500 6Q30 10 30 15q-1 5.500-7 6-6 0-6-3 2-2 1.500-5-1.500-5-8-5T1 11z" fill="url(#eg)"/><path d="M0 15q1-8 9.500-8 6.500 0 9 4-4.500-1-6.500 2.500-1.500 3.500 1 7.500 4 5 13 3-4 6-11 6Q2 29 0 15z" fill="url(#eh)"/><path d="M9 18q0-3 3-5-1 5 2.500 8.500 5 4.500 13 1-4.500 7.500-12 7.500Q9 26 9 18z" fill="#15468f"/><path d="M12 17q0-5 4-5.500 3.500 1 2.500 4.500-2.500 3-1 4.500-5.500 1-5.500-3.500z" fill="#f8f8f8"/></svg>
    <span class="absolute left-[13px] bottom-[-1px] w-5 h-1 rounded-full bg-[#0078d4]"></span>
  </div>
  <svg class="ml-[16px] shrink-0" width="30" height="28" viewBox="0 0 30 28"><path d="M0 2.500Q0 1 1.500 1H9q1.500 0 2.500 1.500L13 5v4H0z" fill="#dd9c0a"/><path d="M0 7q0-1.500 1.500-1.500h9L13 4h15.500Q30 4 30 5.500V26q0 1.500-1.500 1.500h-27Q0 27.500 0 26z" fill="#fccb45"/><path d="M5 27.500V23q0-3 3-3h14q3 0 3 3v4.500z" fill="#0d70bd"/><path d="M9 23.500h12" stroke="#073f78" stroke-width="1.200"/></svg>
  <svg class="ml-[25px] mb-[2px] shrink-0" width="29" height="32" viewBox="0 0 29 32"><defs><linearGradient id="st" x1="0" y1="0" x2="0" y2="1"><stop offset="0" stop-color="#0a63ae"/><stop offset="1" stop-color="#22315e"/></linearGradient></defs><path d="M8 8V3q0-1 1-1h11q1 0 1 1v5" fill="none" stroke="#2fb9ef" stroke-width="1.800"/><path d="M0 6h29v20q0 5-5 5H5q-5 0-5-5z" fill="url(#st)"/><path fill="#f35325" d="M9 13h5v5H9z"/><path fill="#81bc06" d="M15 13h5v5h-5z"/><path fill="#05a6f0" d="M9 19h5v5H9z"/><path fill="#ffba08" d="M15 19h5v5h-5z"/></svg>
  <svg class="ml-[26px] mb-[2px] shrink-0" width="30" height="30" viewBox="0 0 30 30"><rect width="30" height="30" fill="#0078d7"/><path d="M15 25q-9.500-1-9.500-10a9.500 9.500 0 0 1 19 0q0 7.500-7.500 9.800-2.500-.1-2-.1" fill="none" stroke="#0fcaff" stroke-width="3"/></svg>
  <svg class="ml-[27px] mb-[2px] shrink-0" width="27" height="26" viewBox="0 0 27 26"><circle cx="14.500" cy="4.500" r="3.700" fill="#7b83eb"/><circle cx="22.500" cy="5.500" r="2.700" fill="#5059c9"/><path d="M18 10h8v8q0 4-4.500 4.500H18z" fill="#5059c9"/><path d="M9 10h11v8q0 6-6 6.500-5-.5-5.500-5z" fill="#7b83eb"/><rect x="0" y="6" width="14" height="14" rx="1.300" fill="#fff"/><path d="M3.500 9.500h7M7 9.500V17" stroke="#5059c9" stroke-width="1.900"/></svg>
  <div class="ml-[17px] w-[48px] h-[48px] shrink-0 relative flex items-center justify-center">
    <svg width="30" height="30" viewBox="0 0 30 30"><circle cx="15" cy="15" r="12.500" fill="none" stroke="#555" stroke-width="4" stroke-dasharray="3.300 3.250"/><circle cx="15" cy="15" r="11" fill="#251c35" stroke="#c9c9c9" stroke-width="2.600"/><text x="15" y="14" text-anchor="middle" font-family="DejaVu Sans Mono" font-size="7" font-weight="700" fill="#ff7b12" textLength="27" lengthAdjust="spacingAndGlyphs">Java EE</text><text x="15" y="20.500" text-anchor="middle" font-family="DejaVu Sans Mono" font-size="7" font-weight="700" fill="#ff7b12">IDE</text></svg>
    <span class="absolute left-[20px] bottom-0 w-2 h-1 rounded-full bg-[#8a8a8a]"></span>
  </div>
  <div class="ml-[7px] w-[48px] h-[48px] shrink-0 relative flex items-center justify-center">
    <svg width="30" height="30" viewBox="0 0 30 30"><path d="M15 15L2 7.500A15 15 0 0 1 28 7.500z" fill="#e33b2e"/><path d="M15 15L2 7.500A15 15 0 0 0 15 30l6.500-11.200z" fill="#1f9d50"/><path d="M15 8h13.200A15 15 0 0 1 15 30l6.500-11.200z" fill="#fcc619"/><circle cx="15" cy="15" r="7" fill="#fff"/><circle cx="15" cy="15" r="5.600" fill="#1f71ea"/></svg>
    <span class="absolute left-[25px] top-[2px] w-5 h-5 rounded-full bg-[#ef6c00] border border-[#b06a3a] text-[#ffe3cc] text-[12px] leading-[18px] text-center">U</span>
    <span class="absolute left-[20px] bottom-0 w-2 h-1 rounded-full bg-[#8a8a8a]"></span>
  </div>
  <div class="ml-[7px] w-[48px] h-[48px] shrink-0 relative flex items-center justify-center">
    <svg width="22" height="30" viewBox="0 0 22 30"><rect x="0" y="2" width="22" height="26" rx="1.500" fill="#5cc3df"/><path d="M0 26.500h22V29q0 1-1 1H1q-1 0-1-1z" fill="#8a4a20"/><path d="M0 26h22v1.300H0z" fill="#fff"/><path d="M4 9.500h14M4 14.500h14M4 19.500h14" stroke="#0e5a74" stroke-width="1.800"/><path d="M3.500 0v4M8.500 0v4M13.500 0v4M18.500 0v4" stroke="#0e5a74" stroke-width="2.200"/></svg>
    <span class="absolute left-[20px] bottom-0 w-2 h-1 rounded-full bg-[#8a8a8a]"></span>
  </div>

  <svg class="ml-[105px] mb-[2px] shrink-0" width="16" height="16" viewBox="0 0 16 16" fill="none" stroke="#1b1b1b" stroke-width="1.700"><path d="M2 11.500l6-6.500 6 6.500"/></svg>
  <svg class="ml-[21px] mb-[4px] shrink-0" width="22" height="16" viewBox="0 0 22 16"><path d="M6 14.500q-5 0-5-4.500 0-3.500 4-4Q7 1.500 11 1.500q4.500 0 6 4.500 4 .5 4 4.500 0 4-4.500 4z" fill="#f0f0f0" stroke="#222" stroke-width="1.400"/><path d="M2 10q0-3 4-3.500Q7.500 2.500 11 2.500q4 0 5.500 4Q19 7 20 9q-3-1.500-6-.5l-8 5Q2.500 13.500 2 10z" fill="#999"/></svg>
  <div class="ml-[21px] w-[32px] text-center text-[15px] leading-5 tracking-[-0.6px] text-[#1b1b1b] pb-px">ENG<br>IN</div>
  <svg class="ml-[20px] mb-[3px] shrink-0" width="22" height="18" viewBox="0 0 22 18" fill="none" stroke="#1b1b1b" stroke-width="1.500"><path d="M1.500 7q9.500-9.500 19 0M4.500 10q6.500-6.500 13 0M7.500 13q3.500-3.500 7 0"/><circle cx="11" cy="15" r="1.700" fill="#1b1b1b" stroke="none"/></svg>
  <svg class="ml-[8px] mb-[2px] shrink-0" width="22" height="18" viewBox="0 0 22 18" fill="none" stroke="#1b1b1b" stroke-width="1.300"><path d="M1.500 6.500v5h3.300l4.200 4V2.500l-4.200 4z" stroke-linejoin="round"/><path d="M11.500 6q1.700 3 0 6M14.500 4q3 5 0 10M17.500 2q4.500 7 0 14"/></svg>
  <svg class="ml-[7px] mb-[4px] shrink-0" width="24" height="20" viewBox="0 0 24 20"><path d="M11 5.500h7.500q2 0 2 2v7q0 2-2 2H6q-1 0-1.500-.8" fill="none" stroke="#1b1b1b" stroke-width="1.400"/><rect x="21" y="8.500" width="2" height="5" rx="1" fill="#1b1b1b"/><path d="M6 .5q5 5 2.500 10Q7 13 5 13l-1.500 3-.8-.5L4 12.500Q1 11 1.500 6.500 2 4.500 4 4z" fill="#1b1b1b"/><path d="M8.500 13.500q2-2 2-5" fill="none" stroke="#1b1b1b"/></svg>
  <div class="ml-[6px] w-[90px] text-right text-[15px] leading-5 text-[#1b1b1b] whitespace-nowrap pb-[3px]">23:35<br>23-07-2024</div>
  <svg class="ml-[9px] mb-[2px] shrink-0" width="21" height="22" viewBox="0 0 21 22" fill="none" stroke="#1b1b1b" stroke-width="1.300"><path d="M12 3Q4 1.500 3.500 9v4.500l-2 3.500h16l-2-3.500M7 17.500q2.500 3.500 5 0"/><path d="M7.500 8.500h4l-4 5h4M13 2.500h4.500l-4.500 5h4.500" stroke-width="1.700"/></svg>
  <svg class="ml-[19px] shrink-0" width="30" height="30" viewBox="0 0 30 30"><defs><linearGradient id="pa" x1="0" y1="0" x2="0" y2="1"><stop offset="0" stop-color="#1583e0"/><stop offset=".5" stop-color="#37b27b"/><stop offset="1" stop-color="#f6c915"/></linearGradient><linearGradient id="pb" x1="0" y1="0" x2="0" y2="1"><stop offset="0" stop-color="#a04ff0"/><stop offset="1" stop-color="#f4666e"/></linearGradient></defs><path d="M12 1h8q2 0 3 4l1 3h-9z" fill="#1047c4"/><path d="M8 1h8q-2 1-3 4L10 16q-1 4-4 4H3Q-.5 20 .5 15L4 5q1-4 4-4z" fill="url(#pa)"/><path d="M19.500 8H26q3.500 0 3 4l-2.500 9H14q2-1 3-5l1-4.500Q18.500 8 19.500 8z" fill="url(#pb)"/><rect x="7" y="20" width="23" height="9.500" rx="2" fill="#ffc80a"/><text x="18.500" y="27.300" text-anchor="middle" font-family="Open Sans" font-size="7.500" font-weight="800" fill="#222" letter-spacing=".5">PRE</text></svg>
</footer>
</body>
</html>
